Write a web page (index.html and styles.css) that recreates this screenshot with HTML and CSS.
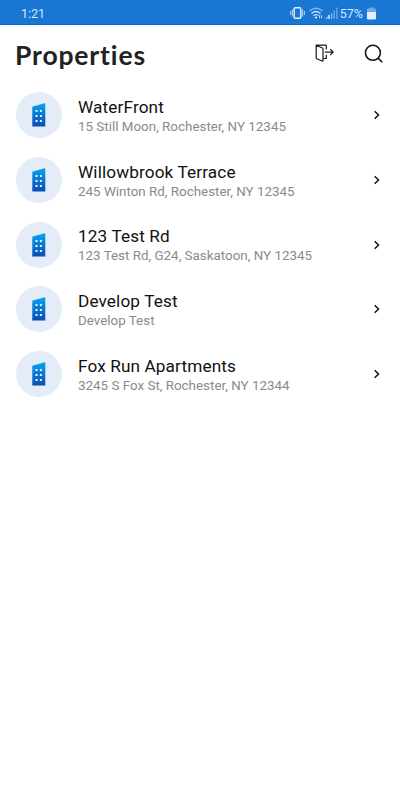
FILE: index.html
```html
<!DOCTYPE html>
<html lang="en">
<head>
  <meta charset="UTF-8">
  <meta name="viewport" content="width=device-width, initial-scale=1">
  <title>Properties</title>
  <link rel="stylesheet" href="styles.css">
</head>
<body>

  <svg class="defs" width="0" height="0">
    <defs>
      <linearGradient id="blue" x1="0" y1="0" x2="0" y2="1">
        <stop offset="0" stop-color="#06a4f0"/>
        <stop offset="1" stop-color="#0a4cb4"/>
      </linearGradient>
      <symbol id="building" viewBox="0 0 14 24">
        <path fill="url(#blue)" d="M0.3 4.3Q0.3 3.7 0.9 3.5L12.6 0.2Q13.3 0 13.3 0.8V23.5H0.3Z"/>
        <path fill="#eaf3ff" d="M3.5 7h2v2h-2zM7.9 7h2v2h-2zM3.5 12h2v2h-2zM7.9 12h2v2h-2zM3.5 17h2v2h-2zM7.9 17h2v2h-2z"/>
      </symbol>
      <symbol id="chevron" viewBox="0 0 8 10">
        <path fill="none" stroke="#111" stroke-width="1.5" d="M1.7 1.2L5.5 5L1.7 8.8"/>
      </symbol>
    </defs>
  </svg>

  <div class="status-bar">
    <span class="time">1:21</span>
    <div class="status-icons">
      <svg class="vibrate" width="15" height="12" viewBox="0 0 15 12">
        <rect x="4.2" y="0.8" width="6.6" height="10.4" rx="1" fill="none" stroke="#e8f1fb" stroke-width="1.4"/>
        <path d="M2.4 2.5v7M0.6 4v4M12.6 2.5v7M14.4 4v4" stroke="#c3dcf5" stroke-width="1"/>
      </svg>
      <svg class="wifi" width="14" height="12" viewBox="0 0 14 12">
        <g fill="none" stroke="#c3dcf5" stroke-width="1.3">
          <path stroke="#82b5e8" d="M0.6 3.9Q7 -1.4 13.4 3.9"/>
          <path d="M2.5 6.4Q7 2.6 11.5 6.4"/>
          <path d="M4.4 8.8Q7 6.6 9.2 8.4"/>
        </g>
        <circle cx="7" cy="10.6" r="1.1" fill="#e8f1fb"/>
        <path d="M10.5 8.2v3M12.5 8.2v3" stroke="#c3dcf5" stroke-width="1"/>
      </svg>
      <svg class="signal" width="13" height="12" viewBox="0 0 13 12">
        <path d="M0.5 11.5L2.5 9.5V11.5Z" fill="#e8f1fb"/>
        <path d="M4 8v4" stroke="#e8f1fb" stroke-width="1.4"/>
        <path d="M6.6 6v6" stroke="#82b5e8" stroke-width="1.4"/>
        <path d="M9.2 3.2v8.8M11.8 0.5v11.5" stroke="#5e9fe0" stroke-width="1.6"/>
      </svg>
      <span class="percent">57%</span>
      <svg class="battery" width="9" height="13" viewBox="0 0 9 13">
        <path d="M0 2.4Q0 1.5 1 1.5H2.5V0.4H6.5V1.5H8Q9 1.5 9 2.4V5H0Z" fill="#71aae5"/>
        <path d="M0 5H9V11.5Q9 12.5 8 12.5H1Q0 12.5 0 11.5Z" fill="#e3eefa"/>
      </svg>
    </div>
  </div>

  <header>
    <h1>Properties</h1>
    <div class="actions">
      <svg class="logout" width="20" height="19" viewBox="0 0 20 19">
        <g fill="none" stroke="#1a1a1a" stroke-width="1.2" stroke-linejoin="round">
          <path d="M1.2 1.2L7.4 4Q8 4.3 8 5V16.4Q8 17.4 7.2 17L1.7 14.7Q1.2 14.5 1.2 14Z"/>
          <path d="M1.2 1.2H10.7Q11.3 1.2 11.3 1.8V5.4M11.3 10.8V14.5H8"/>
          <path d="M9.8 8.1H18M15.2 5.2L18.2 8.1L15.2 11"/>
        </g>
      </svg>
      <svg class="search" width="20" height="20" viewBox="0 0 20 20">
        <circle cx="8.9" cy="8.8" r="7.5" fill="none" stroke="#111" stroke-width="1.5"/>
        <path d="M14 14L18.2 18.2" stroke="#111" stroke-width="1.6"/>
      </svg>
    </div>
  </header>

  <main class="list">
    <div class="property">
      <div class="avatar"><svg width="14" height="24"><use href="#building"/></svg></div>
      <div class="info">
        <div class="name">WaterFront</div>
        <div class="address">15 Still Moon, Rochester, NY 12345</div>
      </div>
      <svg class="chevron" width="8" height="10"><use href="#chevron"/></svg>
    </div>
    <div class="property">
      <div class="avatar"><svg width="14" height="24"><use href="#building"/></svg></div>
      <div class="info">
        <div class="name">Willowbrook Terrace</div>
        <div class="address">245 Winton Rd, Rochester, NY 12345</div>
      </div>
      <svg class="chevron" width="8" height="10"><use href="#chevron"/></svg>
    </div>
    <div class="property">
      <div class="avatar"><svg width="14" height="24"><use href="#building"/></svg></div>
      <div class="info">
        <div class="name">123 Test Rd</div>
        <div class="address">123 Test Rd, G24, Saskatoon, NY 12345</div>
      </div>
      <svg class="chevron" width="8" height="10"><use href="#chevron"/></svg>
    </div>
    <div class="property">
      <div class="avatar"><svg width="14" height="24"><use href="#building"/></svg></div>
      <div class="info">
        <div class="name">Develop Test</div>
        <div class="address">Develop Test</div>
      </div>
      <svg class="chevron" width="8" height="10"><use href="#chevron"/></svg>
    </div>
    <div class="property">
      <div class="avatar"><svg width="14" height="24"><use href="#building"/></svg></div>
      <div class="info">
        <div class="name">Fox Run Apartments</div>
        <div class="address">3245 S Fox St, Rochester, NY 12344</div>
      </div>
      <svg class="chevron" width="8" height="10"><use href="#chevron"/></svg>
    </div>
  </main>

</body>
</html>
```

FILE: styles.css
```css
* {
  box-sizing: border-box;
}

body {
  margin: 0;
  background: #fff;
  font-family: Roboto, sans-serif;
  color: #111;
}

svg {
  display: block;
  flex-shrink: 0;
}

.defs {
  position: absolute;
}

.status-bar {
  display: flex;
  justify-content: space-between;
  align-items: center;
  height: 25px;
  padding: 2px 24px 0 21px;
  background: #1976d2;
  border-bottom: 1px solid #0b66c8;
  color: #d5e6f8;
  font-size: 12.5px;
}

.status-icons {
  display: flex;
  align-items: center;
}

.wifi {
  margin-left: 4px;
}

.signal {
  margin-left: 2px;
}

.percent {
  margin-left: 2px;
  font-size: 12.5px;
}

.battery {
  margin-left: 4px;
}

header {
  display: flex;
  justify-content: space-between;
  align-items: center;
  height: 60px;
  padding: 0 16px 3px 15px;
}

h1 {
  margin: 2px 0 0;
  font-family: Lato, sans-serif;
  font-size: 26.5px;
  font-weight: bold;
  font-variant-ligatures: none;
  letter-spacing: 0.85px;
  line-height: 36px;
  color: #222;
}

.actions {
  display: flex;
  align-items: center;
  gap: 29px;
}

.list {
  padding-top: 7px;
}

.property {
  display: flex;
  align-items: center;
  height: 46px;
  margin-bottom: 18.75px;
  padding: 0 19px 0 16px;
}

.avatar {
  display: flex;
  justify-content: center;
  align-items: center;
  width: 46px;
  height: 46px;
  border-radius: 50%;
  background: #e4ecf8;
}

.info {
  flex: 1;
  margin-left: 16px;
  padding-top: 3.5px;
  white-space: nowrap;
}

.name {
  font-size: 17.2px;
  line-height: 20px;
  letter-spacing: 0.12px;
}

.address {
  font-size: 13.4px;
  line-height: 20px;
  color: #8a8a8a;
}
```
